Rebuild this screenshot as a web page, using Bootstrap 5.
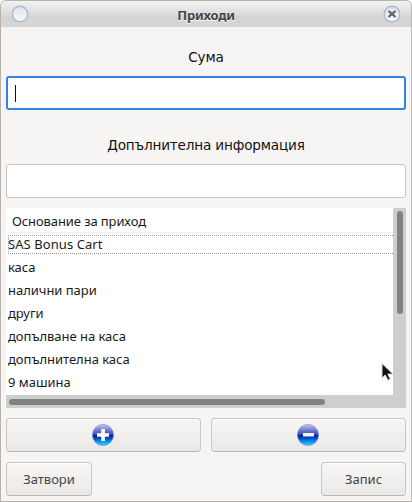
<!DOCTYPE html>
<html lang="bg">
<head>
<meta charset="utf-8">
<meta name="viewport" content="width=device-width, initial-scale=1">
<title>Приходи</title>
<link href="https://cdn.jsdelivr.net/npm/bootstrap@5.3.0/dist/css/bootstrap.min.css" rel="stylesheet">
<style>
body { font-family: "Noto Sans", sans-serif; font-size: 13px; color: #1a1a1a; width: 412px; height: 502px; overflow: hidden; background: #fff; }
.window { width: 412px; height: 502px; background: #f6f5f3; border: 1px solid #b9b2ac; border-right-color: #b8b8b6; border-radius: 6px 6px 0 0; }
.titlebar { height: 26px; padding: 0 11px; background: linear-gradient(#f2f2f2, #dcdcdc 50%, #d3d3d3 60%, #d6d6d6); border-radius: 5px 5px 0 0; }
.titlebar svg { display: block; flex: none; }
.title-text { font: bold 13px/26px "Noto Sans", sans-serif; letter-spacing: -.25px; color: #444; padding-top: 2px; text-shadow: 0 1px 0 #fff; }
.content-area { padding: 0 5px; }
.field-label { font-family: "DejaVu Sans", sans-serif; font-size: 13.6px; letter-spacing: -.17px; line-height: 20px; color: #111; }
.label-sum { margin: 20px 0 9px; }
.label-info { margin: 25px 0 9px; }
.entry { height: 34px; border: 1px solid #c9c4bf; border-radius: 3px; background: #fff; box-shadow: none; padding: 0 8px; }
.entry.active { border: 2px solid #3584e4; padding-left: 7px; }
.caret { width: 1px; height: 17px; background: #111; }
.tree { height: 200px; margin: 10px 0; display: grid; grid-template-columns: 387px 13px; grid-template-rows: 187px 13px; background: #cecece; }
.tree-rows { background: #fff; overflow: hidden; }
.tree-head { height: 25px; line-height: 27px; padding-left: 6px; border-bottom: 1px solid #f0f0f0; letter-spacing: -.1px; }
.tree-row { height: 23px; line-height: 23px; padding-left: 2px; white-space: nowrap; letter-spacing: -.03px; }
.tree-row.focused { padding: 2px 0 2px 2px; }
.focus-line { height: 19px; line-height: 17px; border: 1px dotted #999; border-right: 0; text-indent: -1px; letter-spacing: .07px; }
.thumb { background: #7f8483; border-radius: 3px; }
.thumb-v { width: 6px; height: 103px; margin: 3px 0 0 4px; }
.thumb-h { width: 316px; height: 6px; margin: 4px 0 0 3px; }
.push { height: 34px; padding: 0; border: 1px solid #c9c5c0; border-bottom-color: #b9b5b0; border-radius: 4px; background: linear-gradient(#f7f6f4, #ebe9e7); box-shadow: inset 0 1px #fff; color: #444; font-size: 13px; line-height: 32px; }
.push svg { display: block; margin: auto; position: relative; left: -1px; }
.pair { gap: 10px; }
.last-row { margin-top: 10px; }
.close-btn { width: 86px; }
.save-btn { width: 85px; }
.pointer { position: absolute; left: 381px; top: 362px; }
</style>
</head>
<body>
<main class="window">
  <header class="titlebar d-flex align-items-center justify-content-between">
    <svg width="17" height="18" viewBox="0 0 17 18"><defs><linearGradient id="ring" x2="0" y2="1"><stop stop-color="#dfe3e9"/><stop offset="1" stop-color="#f8f9fb"/></linearGradient></defs><circle cx="8" cy="9" r="7.7" fill="url(#ring)" stroke="#adb9cc" stroke-width="1.4"/></svg>
    <span class="title-text">Приходи</span>
    <svg width="17" height="18" viewBox="0 0 17 18"><circle cx="9" cy="9" r="7.7" fill="url(#ring)" stroke="#adb9cc" stroke-width="1.4"/><path d="M5.500 6l7 6M12.500 6l-7 6" stroke="#5c5c5c" stroke-width="2.2"/></svg>
  </header>
  <div class="content-area">
    <div class="field-label label-sum text-center">Сума</div>
    <div class="entry active form-control d-flex align-items-center"><span class="caret"></span></div>
    <div class="field-label label-info text-center">Допълнителна информация</div>
    <div class="entry form-control"></div>
    <div class="tree">
      <div class="tree-rows">
        <div class="tree-head">Основание за приход</div>
        <div class="tree-row focused"><div class="focus-line">SAS Bonus Cart</div></div>
        <div class="tree-row">каса</div>
        <div class="tree-row">налични пари</div>
        <div class="tree-row">други</div>
        <div class="tree-row">допълване на каса</div>
        <div class="tree-row">допълнителна каса</div>
        <div class="tree-row">9 машина</div>
      </div>
      <div><div class="thumb thumb-v"></div></div>
      <div><div class="thumb thumb-h"></div></div>
    </div>
    <div class="d-flex pair">
      <button class="btn push flex-fill"><svg width="22" height="22" viewBox="0 0 22 22"><defs><linearGradient id="orb" x2="0" y2="1"><stop stop-color="#c9c9ea"/><stop offset=".3" stop-color="#6675cc"/><stop offset=".48" stop-color="#3c4dbd"/><stop offset=".5" stop-color="#0010a0"/><stop offset=".65" stop-color="#0648c8"/><stop offset=".85" stop-color="#08a8f4"/><stop offset="1" stop-color="#4cc8f8"/></linearGradient></defs><circle cx="11" cy="11" r="10.6" fill="url(#orb)" stroke="#7d95cf" stroke-width=".7"/><path d="M9.3 5h3.6v4.2H17v3.6h-4.1V17H9.3v-4.2H5V9.200h4.300z" fill="#fff"/></svg></button>
      <button class="btn push flex-fill"><svg width="22" height="22" viewBox="0 0 22 22"><circle cx="11" cy="11" r="10.6" fill="url(#orb)" stroke="#7d95cf" stroke-width=".7"/><path d="M6 9h11v3.500H6z" fill="#f4f4f4"/></svg></button>
    </div>
    <div class="d-flex justify-content-between last-row">
      <button class="btn push close-btn">Затвори</button>
      <button class="btn push save-btn">Запис</button>
    </div>
  </div>
  <svg class="pointer" width="14" height="20" viewBox="0 0 14 20"><path d="M1 1.500V16l3.300-3 2.500 5.300 2.500-1.200-2.500-5H12z" fill="#111" stroke="#ddd" stroke-width="1"/></svg>
</main>
<script src="https://cdn.jsdelivr.net/npm/bootstrap@5.3.0/dist/js/bootstrap.bundle.min.js"></script>
</body>
</html>
